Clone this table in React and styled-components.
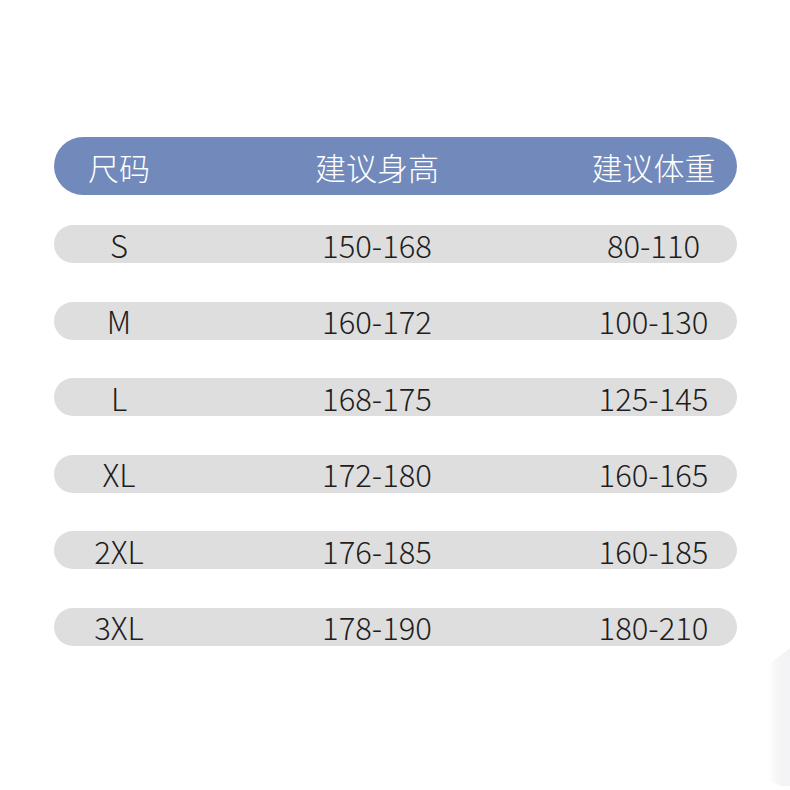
import React from "react";
import styled, { createGlobalStyle } from "styled-components";

const GlobalStyle = createGlobalStyle`
  html, body {
    margin: 0;
    padding: 0;
    background: #ffffff;
  }
  body {
    font-family: "Noto Sans CJK SC", "Noto Sans", sans-serif;
  }
`;

const Page = styled.div`
  position: relative;
  width: 790px;
  height: 790px;
  overflow: hidden;
  background: #ffffff;
  padding: 137px 54px 0;
  box-sizing: border-box;
`;

const Table = styled.div`
  display: flex;
  flex-direction: column;
  width: 683px;
`;

const Row = styled.div`
  display: grid;
  grid-template-columns: 130px 386px 167px;
  align-items: center;
  height: ${(p) => (p.$header ? "58px" : "38px")};
  margin-top: ${(p) => (p.$header ? "0" : p.$first ? "30px" : "38.5px")};
  border-radius: ${(p) => (p.$header ? "29px" : "19px")};
  background: ${(p) => (p.$header ? "#718abb" : "#dedede")};
  color: ${(p) => (p.$header ? "#ffffff" : "#1e1e1e")};
`;

const Cell = styled.div`
  text-align: center;
  font-size: 31px;
  font-weight: 300;
  line-height: 1;
  white-space: nowrap;
`;

/* faint folded-paper edge at bottom right */
const EdgeFold = styled.div`
  position: absolute;
  right: 0;
  top: 648px;
  width: 22px;
  height: 138px;
  background: linear-gradient(90deg, #ffffff 0%, #f6f6f7 40%, #f3f3f5 100%);
  clip-path: polygon(100% 0, 100% 100%, 60% 100%, 0 96%, 0 12%);
`;

const rows = [
  ["S", "150-168", "80-110"],
  ["M", "160-172", "100-130"],
  ["L", "168-175", "125-145"],
  ["XL", "172-180", "160-165"],
  ["2XL", "176-185", "160-185"],
  ["3XL", "178-190", "180-210"],
];

const App = () => (
  <>
    <GlobalStyle />
    <Page>
      <Table>
        <Row $header>
          <Cell>尺码</Cell>
          <Cell>建议身高</Cell>
          <Cell>建议体重</Cell>
        </Row>
        {rows.map((r, i) => (
          <Row key={r[0]} $first={i === 0}>
            <Cell>{r[0]}</Cell>
            <Cell>{r[1]}</Cell>
            <Cell>{r[2]}</Cell>
          </Row>
        ))}
      </Table>
      <EdgeFold />
    </Page>
  </>
);

export default App;
